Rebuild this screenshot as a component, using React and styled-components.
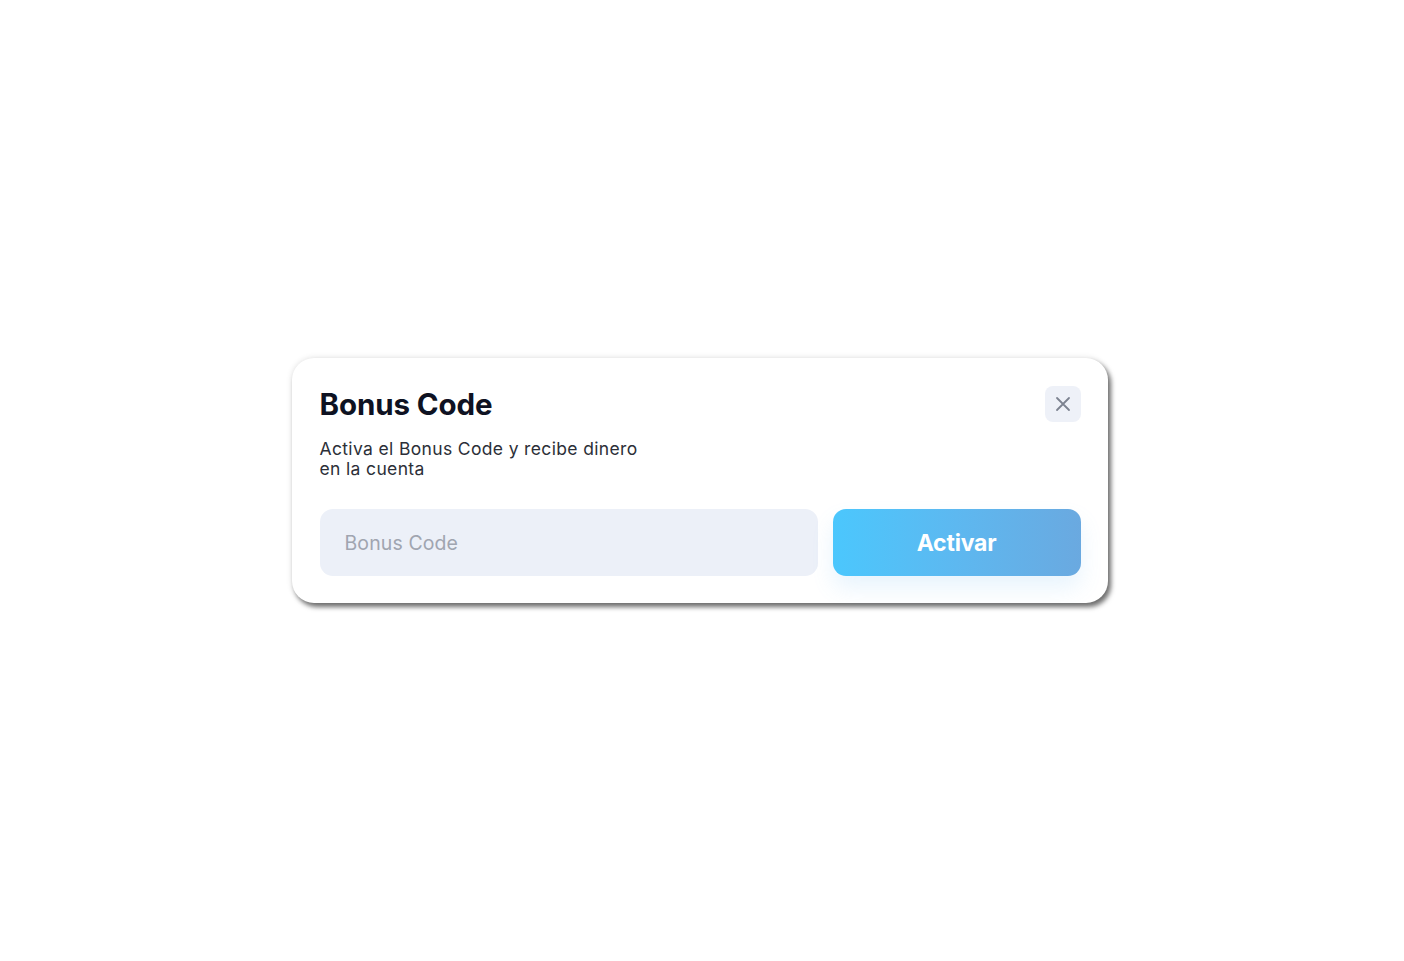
import React from "react";
import styled, { createGlobalStyle } from "styled-components";

const Global = createGlobalStyle`
  html, body { margin: 0; padding: 0; background: #ffffff; }
  body { font-family: Inter, "Noto Sans", sans-serif; }
  * { box-sizing: border-box; }
`;

const Page = styled.div`
  min-height: 961px;
  display: flex;
  align-items: center;
  justify-content: center;
  padding-right: 5px;
`;

const Modal = styled.div`
  width: 816px;
  background: #ffffff;
  border-radius: 22px;
  padding: 28px 27px 27px 28px;
  box-shadow: 3px 4px 5px rgba(0, 0, 0, 0.55), 0 0 6px rgba(0, 0, 0, 0.12);
`;

const Header = styled.div`
  display: flex;
  align-items: center;
  justify-content: space-between;
  height: 36px;
`;

const Title = styled.h2`
  margin: 0;
  font-family: Inter, sans-serif;
  font-weight: 700;
  font-size: 29.5px;
  letter-spacing: -0.1px;
  color: #0e1222;
`;

const CloseButton = styled.button`
  width: 36px;
  height: 36px;
  border: none;
  border-radius: 8px;
  background: #eef1f8;
  display: flex;
  align-items: center;
  justify-content: center;
  padding: 0;
  cursor: pointer;
`;

const Subtitle = styled.p`
  margin: 17px 0 0;
  max-width: 330px;
  font-family: Inter, sans-serif;
  font-size: 17.5px;
  letter-spacing: 0.35px;
  line-height: 20px;
  color: #2c2f38;
`;

const Row = styled.div`
  margin-top: 30px;
  display: flex;
  gap: 15px;
`;

const Input = styled.input`
  flex: 1;
  height: 67px;
  border: none;
  outline: none;
  border-radius: 13px;
  background: #ecf0f8;
  padding: 0 24px 0 25px;
  font-family: Inter, sans-serif;
  font-size: 19.5px;
  letter-spacing: 0.1px;
  color: #1a1d26;
  caret-color: #1a1d26;
  &::placeholder { color: #a0a5b0; }
`;

const ActivateButton = styled.button`
  width: 248px;
  height: 67px;
  border: none;
  border-radius: 13px;
  background: linear-gradient(90deg, #4bc7fd 0%, #5db8f0 50%, #6aa9e0 100%);
  color: #ffffff;
  font-family: Inter, sans-serif;
  font-weight: 700;
  font-size: 23px;
  letter-spacing: -0.2px;
  cursor: pointer;
  box-shadow: 0 12px 22px rgba(90, 180, 240, 0.14);
`;

export default function App() {
  return (
    <>
      <Global />
      <Page>
        <Modal>
          <Header>
            <Title>Bonus Code</Title>
            <CloseButton aria-label="Cerrar">
              <svg width="16" height="16" viewBox="0 0 16 16" fill="none">
                <path d="M2 2 L14 14 M14 2 L2 14" stroke="#7c8290" strokeWidth="1.8" strokeLinecap="round" />
              </svg>
            </CloseButton>
          </Header>
          <Subtitle>Activa el Bonus Code y recibe dinero en la cuenta</Subtitle>
          <Row>
            <Input placeholder="Bonus Code" autoFocus />
            <ActivateButton>Activar</ActivateButton>
          </Row>
        </Modal>
      </Page>
    </>
  );
}
